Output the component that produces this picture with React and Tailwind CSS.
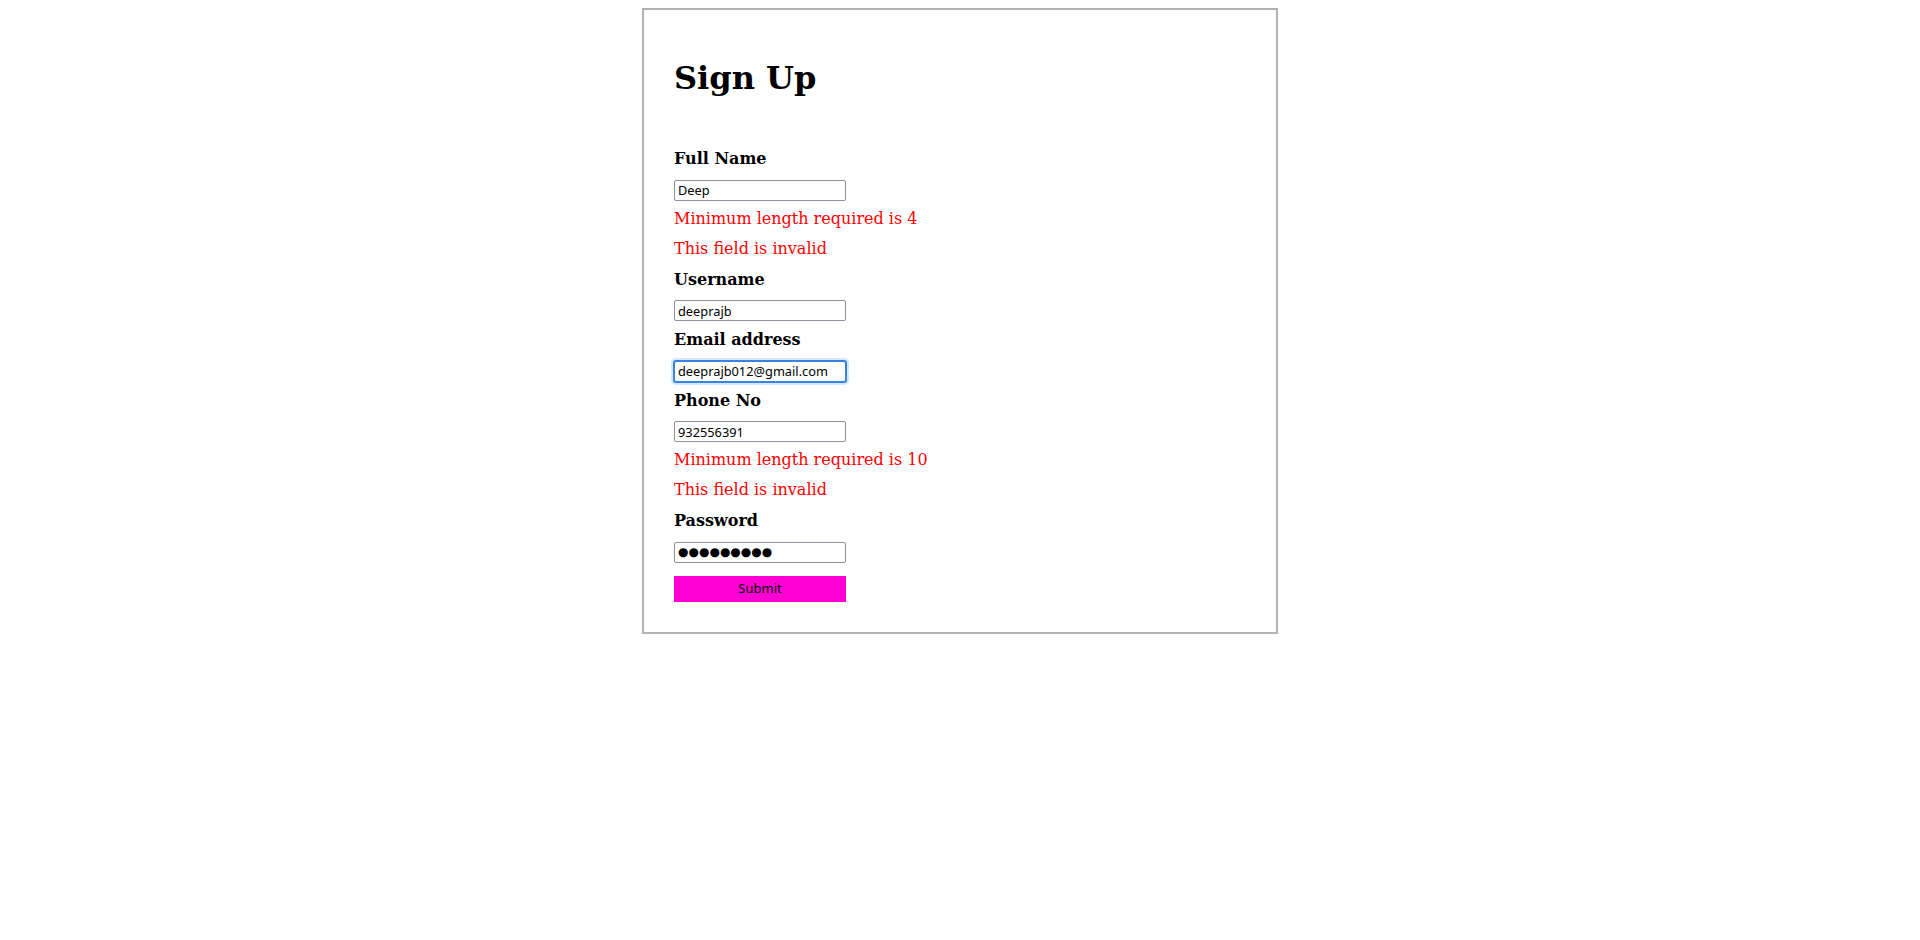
import React from "react";

const Label = ({ children }) => (
  <h3 className="text-[16px] leading-6 font-bold pt-[1px] mb-[2.5px]">{children}</h3>
);

const Err = ({ children }) => (
  <p className="text-[16px] leading-6 text-[#ff0000]">{children}</p>
);

const Field = ({ value, focused, dots }) => (
  <input
    type="text"
    defaultValue={value}
    className={
      "w-[172px] h-[21px] border border-[#8f8f9d] rounded-[2px] px-[3px] text-black bg-white " +
      (dots ? "text-[12px] font-['DejaVu_Sans',sans-serif]" : "text-[12.8px] font-['Noto_Sans',sans-serif]") +
      (focused ? " outline-2 outline-[#3b83e3] -outline-offset-1 shadow-[0_0_0_3px_#d3e6fc]" : " outline-none")
    }
  />
);

const App = () => {
  const fields = [
    { label: "Full Name", value: "Deep", errors: ["Minimum length required is 4", "This field is invalid"] },
    { label: "Username", value: "deeprajb" },
    { label: "Email address", value: "deeprajb012@gmail.com", focused: true },
    { label: "Phone No", value: "932556391", errors: ["Minimum length required is 10", "This field is invalid"] },
    { label: "Password", value: "●●●●●●●●●", dots: true },
  ];

  return (
    <div className="min-h-screen bg-white pt-2 font-['DejaVu_Serif',serif] text-black">
      <div className="w-[636px] mx-auto border-2 border-[#b3b3b3] p-[30px]">
        <h1 className="mt-[18px] text-[32px] leading-[40px] font-bold">Sign Up</h1>
        <form className="mt-[48px] flex flex-col gap-[6px]" onSubmit={(e) => e.preventDefault()}>
          {fields.map((f) => (
            <React.Fragment key={f.label}>
              <Label>{f.label}</Label>
              <Field value={f.value} focused={f.focused} dots={f.dots} />
              {f.errors && f.errors.map((er) => <Err key={er}>{er}</Err>)}
            </React.Fragment>
          ))}
          <button className="mt-[7px] w-[172px] h-[26px] bg-[#ff00d4] text-[13px] text-black font-['Noto_Sans',sans-serif]">
            Submit
          </button>
        </form>
      </div>
    </div>
  );
};

export default App;
